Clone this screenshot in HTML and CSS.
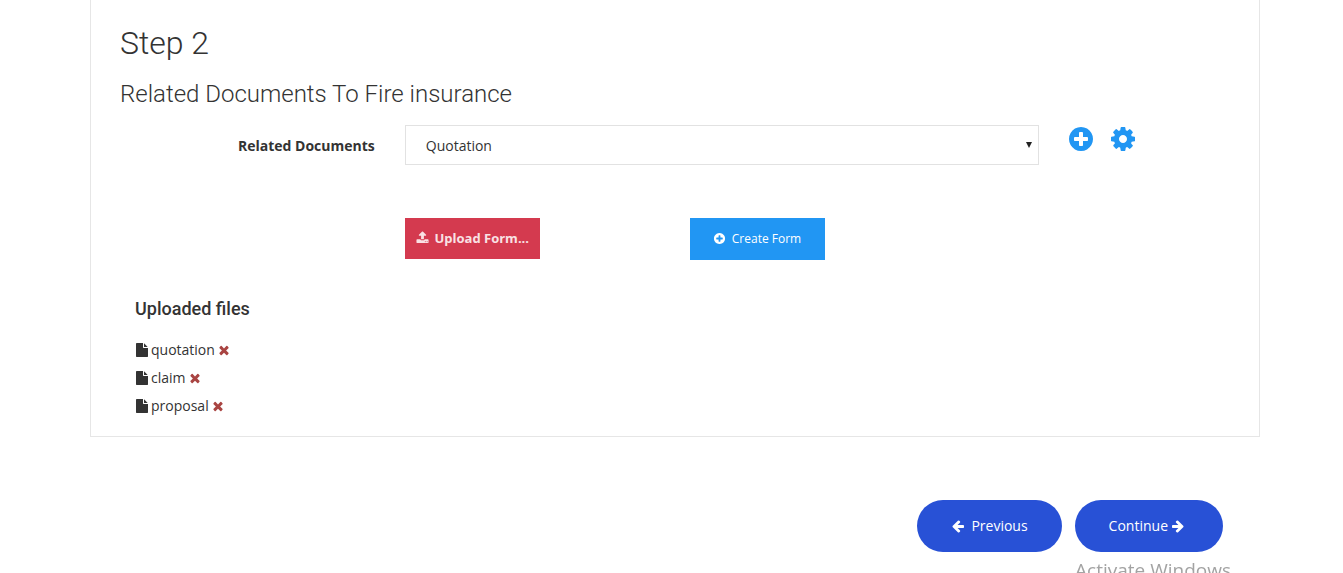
FILE: index.html
```html
<!DOCTYPE html>
<html lang="en">
<head>
    <meta charset="UTF-8">
    <meta name="viewport" content="width=device-width, initial-scale=1.0">
    <title>Step 2</title>
    <link rel="stylesheet" href="styles.css">
</head>
<body>
    <!-- icon shapes, used below with <use> -->
    <svg class="icon-defs" aria-hidden="true">
        <symbol id="plus-circle" viewBox="0 0 1792 1792"><path d="M1344 960v-128q0-26-19-45t-45-19h-256v-256q0-26-19-45t-45-19h-128q-26 0-45 19t-19 45v256h-256q-26 0-45 19t-19 45v128q0 26 19 45t45 19h256v256q0 26 19 45t45 19h128q26 0 45-19t19-45v-256h256q26 0 45-19t19-45zm320-64q0 209-103 385.5t-279.5 279.5-385.5 103-385.5-103-279.5-279.5-103-385.5 103-385.5 279.5-279.5 385.5-103 385.5 103 279.5 279.5 103 385.5z"/></symbol>
        <symbol id="gear" viewBox="0 0 1792 1792"><path d="M1152 896q0-106-75-181t-181-75-181 75-75 181 75 181 181 75 181-75 75-181zm512-109v222q0 12-8 23t-20 13l-185 28q-19 54-39 91 35 50 107 138 10 12 10 25t-9 23q-27 37-99 108t-94 71q-12 0-26-9l-138-108q-44 23-91 38-16 136-29 186-7 28-36 28h-222q-14 0-24.5-8.5t-11.5-21.5l-28-184q-49-16-90-37l-141 107q-10 9-25 9-14 0-25-11-126-114-165-168-7-10-7-23 0-12 8-23 15-21 51-66.5t54-70.5q-27-50-41-99l-183-27q-13-2-21-12.5t-8-23.5v-222q0-12 8-23t19-13l186-28q14-46 39-92-40-57-107-138-10-12-10-24 0-10 9-23 26-36 98.5-107.5t94.5-71.5q13 0 26 10l138 107q44-23 91-38 16-136 29-186 7-28 36-28h222q14 0 24.5 8.5t11.5 21.5l28 184q49 16 90 37l142-107q9-9 24-9 13 0 25 10 129 119 165 170 7 8 7 22 0 12-8 23-15 21-51 66.5t-54 70.5q26 50 41 98l183 28q13 2 21 12.5t8 23.5z"/></symbol>
        <symbol id="upload" viewBox="0 0 1792 1792"><path d="M1344 1472q0-26-19-45t-45-19-45 19-19 45 19 45 45 19 45-19 19-45zm256 0q0-26-19-45t-45-19-45 19-19 45 19 45 45 19 45-19 19-45zm128-224v320q0 40-28 68t-68 28h-1472q-40 0-68-28t-28-68v-320q0-40 28-68t68-28h427q21 56 70.5 92t110.5 36h256q61 0 110.5-36t70.5-92h427q40 0 68 28t28 68zm-325-648q-17 40-59 40h-256v448q0 26-19 45t-45 19h-256q-26 0-45-19t-19-45v-448h-256q-42 0-59-40-17-39 14-69l448-448q18-19 45-19t45 19l448 448q31 30 14 69z"/></symbol>
        <symbol id="file" viewBox="0 0 1792 1792"><path d="M1152 512v-472q22 14 36 28l408 408q14 14 28 36h-472zm-128 32q0 40 28 68t68 28h544v1056q0 40-28 68t-68 28h-1344q-40 0-68-28t-28-68v-1600q0-40 28-68t68-28h800v544z"/></symbol>
        <symbol id="times" viewBox="0 0 1792 1792"><path d="M1490 1322q0 40-28 68l-136 136q-28 28-68 28t-68-28l-294-294-294 294q-28 28-68 28t-68-28l-136-136q-28-28-28-68t28-68l294-294-294-294q-28-28-28-68t28-68l136-136q28-28 68-28t68 28l294 294 294-294q28-28 68-28t68 28l136 136q28 28 28 68t-28 68l-294 294 294 294q28 28 28 68z"/></symbol>
        <symbol id="arrow-left" viewBox="0 0 1792 1792"><path d="M1664 896v128q0 53-32.5 90.5t-84.5 37.5h-704l293 294q38 36 38 90t-38 90l-75 76q-37 37-90 37-52 0-91-37l-651-652q-37-37-37-90 0-52 37-91l651-650q38-38 91-38 52 0 90 38l75 74q38 38 38 91t-38 91l-293 293h704q52 0 84.5 37.5t32.5 90.5z"/></symbol>
        <symbol id="arrow-right" viewBox="0 0 1792 1792"><path d="M1600 960q0 54-37 91l-651 651q-39 37-91 37-51 0-90-37l-75-75q-38-38-38-91t38-91l293-293h-704q-52 0-84.5-37.5t-32.5-90.5v-128q0-53 32.5-90.5t84.5-37.5h704l-293-294q-38-36-38-90t38-90l75-75q38-38 90-38 53 0 91 38l651 651q37 35 37 90z"/></symbol>
    </svg>

    <div class="container">
        <form class="panel">
            <h2>Step 2</h2>
            <h3>Related Documents To Fire insurance</h3>

            <div class="row">
                <label class="control-label" for="documents">Related Documents</label>
                <div class="select-box">
                    <select id="documents">
                        <option>Quotation</option>
                    </select>
                    <svg class="caret" viewBox="0 0 6 6" aria-hidden="true"><path d="M0 0h6L3 6z"/></svg>
                </div>
                <div class="tools">
                    <a href="#" aria-label="Add"><svg class="icon icon-lg"><use href="#plus-circle"/></svg></a>
                    <a href="#" aria-label="Settings"><svg class="icon icon-lg"><use href="#gear"/></svg></a>
                </div>
            </div>

            <div class="row actions">
                <button type="button" class="btn btn-upload"><svg class="icon"><use href="#upload"/></svg>Upload Form...</button>
                <button type="button" class="btn btn-create"><svg class="icon"><use href="#plus-circle"/></svg>Create Form</button>
            </div>

            <div class="files">
                <h4>Uploaded files</h4>
                <ul>
                    <li><svg class="icon"><use href="#file"/></svg><span>quotation</span><a href="#" aria-label="Remove quotation"><svg class="icon"><use href="#times"/></svg></a></li>
                    <li><svg class="icon"><use href="#file"/></svg><span>claim</span><a href="#" aria-label="Remove claim"><svg class="icon"><use href="#times"/></svg></a></li>
                    <li><svg class="icon"><use href="#file"/></svg><span>proposal</span><a href="#" aria-label="Remove proposal"><svg class="icon"><use href="#times"/></svg></a></li>
                </ul>
            </div>
        </form>

        <div class="pager">
            <button type="button" class="btn-round btn-prev"><svg class="icon"><use href="#arrow-left"/></svg>Previous</button>
            <button type="button" class="btn-round btn-next">Continue<svg class="icon"><use href="#arrow-right"/></svg></button>
        </div>
    </div>

    <div class="watermark">Activate Windows</div>
</body>
</html>
```

FILE: styles.css
```css
* {
    box-sizing: border-box;
}
body {
    margin: 0;
    padding-left: 7px;
    background: #fff;
    color: #333;
    font-family: "Open Sans", sans-serif;
    font-size: 14px;
    line-height: 20px;
    overflow: hidden;
}
.icon-defs {
    display: none;
}
.icon {
    width: 14px;
    height: 14px;
    fill: currentColor;
    flex: none;
}
.icon-lg {
    display: block;
    width: 28px;
    height: 28px;
}
.container {
    max-width: 1170px;
    margin: 0 auto;
}
.panel {
    padding: 24px 15px 16px 14px;
    border: 1px solid #e6e6e6;
    border-top: 0;
}
h2, h3, h4 {
    margin: 0;
    font-family: Roboto, sans-serif;
}
h2 {
    padding: 0 15px;
    font-size: 32px;
    font-weight: 300;
    line-height: 38px;
}
h3 {
    padding: 0 15px;
    margin: 17px 0 15px;
    font-size: 24px;
    font-weight: 300;
    line-height: 31px;
}
.row {
    display: grid;
    grid-template-columns: repeat(12, minmax(0, 1fr));
}
.control-label {
    grid-column: span 3;
    padding: 11px 15px 0;
    font-weight: bold;
    text-align: right;
}
.select-box {
    grid-column: span 7;
    position: relative;
    padding: 0 15px;
}
select {
    display: block;
    width: 100%;
    height: 40px;
    padding: 1px 20px 0;
    border: 1px solid #e2e2e2;
    border-radius: 0;
    background: #fff;
    color: #333;
    font: inherit;
    appearance: none;
}
.caret {
    position: absolute;
    top: 17px;
    right: 22px;
    width: 6px;
    height: 6px;
    fill: #222;
    pointer-events: none;
}
.tools {
    grid-column: span 2;
    display: flex;
    gap: 14px;
    padding: 0 13px;
}
.tools a {
    color: #2196f3;
}
.actions {
    align-items: start;
    margin-top: 53px;
}
.btn {
    display: flex;
    align-items: center;
    justify-content: center;
    gap: 6px;
    width: 135px;
    margin-left: 15px;
    padding: 0 0 2px;
    border: 0;
    color: #fff;
    font-family: inherit;
    font-size: 12px;
    cursor: pointer;
}
.btn .icon {
    width: 13px;
    height: 13px;
}
.btn-upload {
    grid-column: 4 / span 3;
    height: 41px;
    background: #d43a4f;
    color: #f9e1e4;
    font-size: 13px;
    font-weight: bold;
}
.btn-create {
    grid-column: 7 / span 3;
    height: 42px;
    background: #2196f3;
}
.files {
    padding: 0 30px;
    margin-top: 38px;
}
h4 {
    font-size: 18px;
    font-weight: 500;
    line-height: 22px;
}
.files ul {
    margin: 16px 0 0;
    padding: 0;
    list-style: none;
}
.files li {
    display: flex;
    align-items: center;
    gap: 2px;
    height: 28px;
}
.files a {
    display: flex;
    color: #a94442;
}
.pager {
    display: flex;
    justify-content: flex-end;
    gap: 13px;
    padding: 63px 37px 0;
}
.btn-round {
    display: flex;
    align-items: center;
    height: 52px;
    padding: 0 34px;
    border: 0;
    border-radius: 26px;
    background: #2851d6;
    color: #fff;
    font: inherit;
    cursor: pointer;
}
.btn-prev {
    gap: 6px;
}
.btn-next {
    gap: 3px;
    padding-right: 38px;
}
/* sits on top of the page, cut by the window edge */
.watermark {
    position: fixed;
    right: 112px;
    top: 100%;
    margin-top: -16px;
    color: #a3a3a3;
    font-size: 19px;
    font-weight: 500;
    line-height: 26px;
    white-space: nowrap;
}
```
